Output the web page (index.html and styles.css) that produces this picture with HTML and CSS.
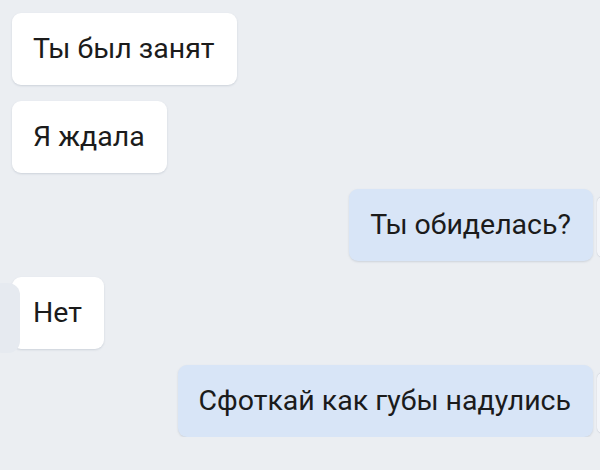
FILE: index.html
```html
<!DOCTYPE html>
<html lang="ru">
<head>
    <meta charset="UTF-8">
    <meta name="viewport" content="width=device-width, initial-scale=1.0">
    <title>Диалог</title>
    <link rel="stylesheet" href="styles.css">
</head>
<body>
    <div id="chat">
        <div class="msg in"><div class="bubble">Ты был занят</div></div>
        <div class="msg in"><div class="bubble">Я ждала</div></div>
        <div class="msg out"><div class="bubble">Ты обиделась?</div></div>
        <div class="msg in tail"><div class="bubble">Нет</div></div>
        <div class="msg out"><div class="bubble">Сфоткай как губы надулись</div></div>
    </div>
</body>
</html>
```

FILE: styles.css
```css
body {
    margin: 0;
    font-family: Roboto, 'Liberation Sans', sans-serif;
    background-color: #ebeef2;
    overflow: hidden;
}
#chat {
    display: flex;
    flex-direction: column;
    gap: 16px;
    padding: 13px 7px 0 12px;
}
.msg {
    display: flex;
    position: relative;
}
.msg.out {
    justify-content: flex-end;
}
.bubble {
    height: 72px;
    display: flex;
    align-items: center;
    padding: 0 22px 1px 21px;
    font-size: 28.5px;
    color: #1b1b1b;
    background-color: #ffffff;
    border-radius: 9px;
    box-shadow: 0 1px 2px rgba(120,130,150,0.25);
    box-sizing: border-box;
}
.msg.out .bubble {
    background-color: #d8e5f7;
}
/* edge of the next bubble peeking in at the right */
.msg.out::after {
    content: '';
    position: absolute;
    right: -14px;
    top: 8px;
    width: 10px;
    height: 60px;
    border-radius: 8px;
    background-color: #f3f5f9;
    box-shadow: 0 0 1px rgba(120,130,150,0.5);
}
/* rounded corner on the left of the reply */
.msg.tail::before {
    content: '';
    position: absolute;
    left: -22px;
    top: 6px;
    width: 30px;
    height: 70px;
    border-radius: 12px;
    background-color: #e6eaf0;
}
```
